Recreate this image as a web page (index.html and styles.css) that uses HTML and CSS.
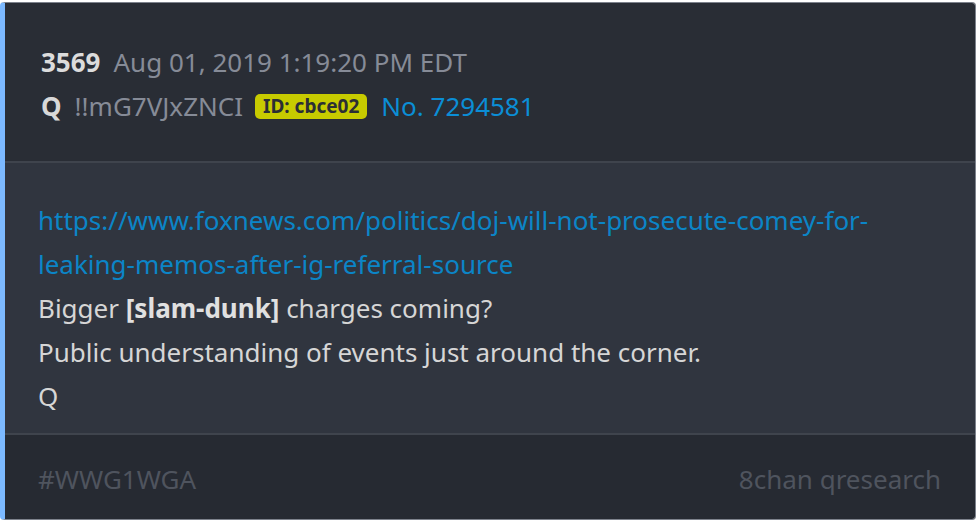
FILE: index.html
```html
<!DOCTYPE html>
<html>
<head>
<meta charset="utf-8">
<link rel="stylesheet" href="styles.css">
</head>
<body>
<div class="card">
  <div class="head">
    <div class="row"><span class="num">3569</span><span class="date">Aug 01, 2019 1:19:20 PM EDT</span></div>
    <div class="row"><span class="name">Q</span><span class="trip">!!mG7VJxZNCI</span><span class="badge">ID: cbce02</span><span class="no">No. 7294581</span></div>
  </div>
  <div class="body">
    <a class="link">https://www.foxnews.com/politics/doj-will-not-prosecute-comey-for-leaking-memos-after-ig-referral-source</a>
    <p>Bigger <b>[slam-dunk]</b> charges coming?</p>
    <p>Public understanding of events just around the corner.</p>
    <p>Q</p>
  </div>
  <div class="foot"><span>#WWG1WGA</span><span>8chan qresearch</span></div>
</div>
</body>
</html>
```
FILE: styles.css
```css
html, body { margin: 0; background: #ffffff; }
body { padding: 2px 2px 2px 0; font-family: "Noto Sans", sans-serif; }
.card {
  height: 518px;
  box-sizing: border-box;
  border: 1px solid #7d828c;
  border-left: 5px solid #7cb9ff;
  border-radius: 4px;
  display: flex;
  flex-direction: column;
  overflow: hidden;
}
.head {
  background: #292d35;
  padding: 37px 33px 0 36px;
  height: 160px;
  box-sizing: border-box;
  border-bottom: 2px solid #3f444d;
}
.row { display: flex; align-items: center; height: 44px; font-size: 26px; }
.num { font-weight: 700; color: #dcdcdc; margin-right: 13px; }
.date { color: #868b97; }
.name { font-weight: 700; color: #d8d8d8; margin-right: 13px; }
.trip { color: #868b97; margin-right: 12px; }
.badge {
  background: #c7cb00; color: #2b2e35; font-weight: 700; font-size: 19px;
  border-radius: 5px; padding: 0 8px; margin-right: 14px; line-height: 25px;
}
.no { color: #0b8ed6; }
.body {
  background: #30353f;
  padding: 35px 33px 8px;
  height: 272px;
  box-sizing: border-box;
  border-bottom: 2px solid #3f444d;
  font-size: 26px;
  line-height: 44px;
  color: #d6d6d6;
}
.link { display: block; color: #0b85c7; text-decoration: none; }
.body p { margin: 0; }
.body b { color: #e0e0e0; }
.foot {
  flex: 1;
  background: #262a32;
  display: flex;
  justify-content: space-between;
  align-items: center;
  padding: 4px 34px 0 33px;
  font-size: 26px;
  color: #4f545e;
}
```
